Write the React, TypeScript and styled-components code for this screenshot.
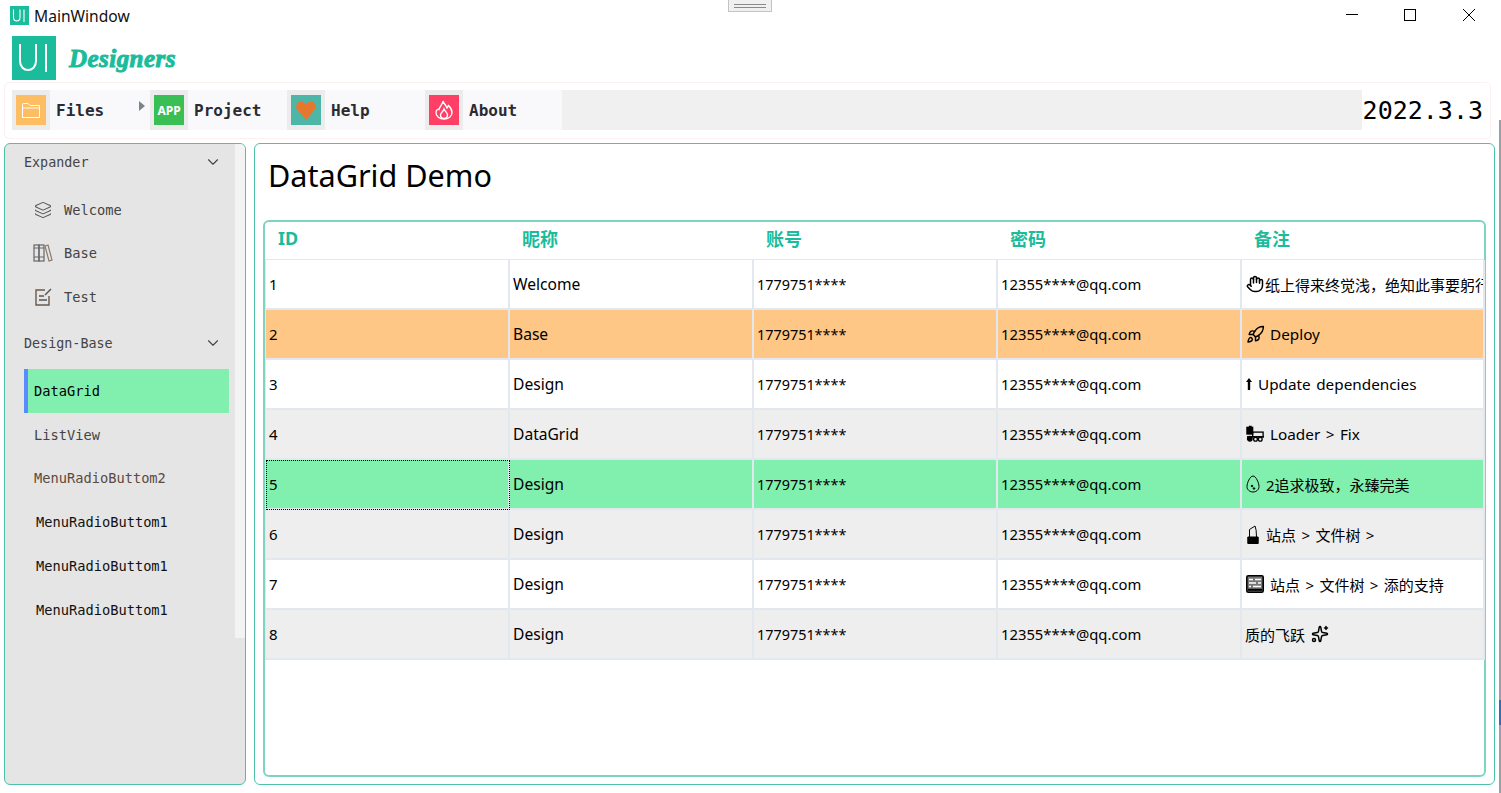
import { ReactNode } from 'react'
import styled, { createGlobalStyle } from 'styled-components'
import { ChevronDown, Hand, Layers, Rocket, Sparkles } from 'lucide-react'

const UI_FONT = `'Noto Sans', 'Noto Sans CJK SC', sans-serif`
const MONO_FONT = `'DejaVu Sans Mono', 'Liberation Mono', monospace`
const TEAL = '#1abc9c'

const GlobalStyle = createGlobalStyle`
  html, body {
    margin: 0;
    padding: 0;
    background: #fff;
    overflow: hidden;
  }
  * { box-sizing: border-box; }
`

const Page = styled.div`
  position: relative;
  width: 1501px;
  height: 793px;
  display: flex;
  flex-direction: column;
  background: #fff;
  font-family: ${UI_FONT};
  color: #000;
  overflow: hidden;
`

const TitleBar = styled.header`
  height: 36px;
  flex: none;
  display: flex;
  align-items: flex-start;
  padding: 6px 26px 0 10px;
`

const TitleIcon = styled.div`
  width: 19px;
  height: 19px;
  margin-right: 5px;
  background: ${TEAL};
  display: flex;
  align-items: center;
  justify-content: center;
`

const TitleText = styled.span`
  font-size: 15.6px;
  line-height: 21px;
  color: #111;
`

const DragHandle = styled.div`
  position: absolute;
  left: 728px;
  top: -1px;
  width: 44px;
  height: 13px;
  background: #f0f0f0;
  border: 1px solid #c4c4c4;
  display: flex;
  flex-direction: column;
  align-items: center;
  justify-content: center;
  gap: 2px;

  i {
    display: block;
    width: 32px;
    height: 1px;
    background: #8a8a8a;
  }
`

const WindowButtons = styled.div`
  margin-left: auto;
  display: flex;
  gap: 46px;
  padding-top: 3px;

  svg:last-child {
    margin-left: 1px;
  }
`

const LogoRow = styled.div`
  height: 46px;
  flex: none;
  display: flex;
  align-items: flex-start;
  padding-left: 12px;
`

const LogoMark = styled.div`
  width: 44px;
  height: 44px;
  background: ${TEAL};
  display: flex;
  align-items: center;
  justify-content: center;
`

const LogoText = styled.span`
  margin: 9px 0 0 13px;
  font-family: 'Liberation Serif', serif;
  font-style: italic;
  font-weight: 700;
  font-size: 25px;
  line-height: 28px;
  letter-spacing: 0.45px;
  color: ${TEAL};
  -webkit-text-stroke: 1px ${TEAL};
`

const MenuBar = styled.nav`
  height: 57px;
  flex: none;
  margin: 0 10px 0 4px;
  padding: 7px 7px 7px 7px;
  display: flex;
  border: 1px solid #fdf0f0;
  border-radius: 5px;
`

const MenuItem = styled.div<{ $width: number }>`
  position: relative;
  width: ${(p) => p.$width}px;
  height: 40px;
  flex: none;
  display: flex;
  align-items: center;
  background: #f9f9fc;
`

const MenuIconBox = styled.div`
  width: 38px;
  height: 40px;
  flex: none;
  background: #ececec;
  display: flex;
  align-items: center;
  justify-content: center;
`

const MenuIcon = styled.div<{ $bg: string }>`
  width: 30px;
  height: 30px;
  background: ${(p) => p.$bg};
  display: flex;
  align-items: center;
  justify-content: center;
  color: #fff;
  font-family: 'Noto Sans', sans-serif;
  font-size: 12px;
  font-weight: 700;
`

const MenuLabel = styled.span`
  margin-left: 6px;
  font-family: ${MONO_FONT};
  font-size: 16px;
  font-weight: 700;
  color: #2b2b33;
`

const SubArrow = styled.span`
  position: absolute;
  right: 5px;
  top: 11px;
  width: 0;
  height: 0;
  border-style: solid;
  border-width: 5px 0 5px 6px;
  border-color: transparent transparent transparent #7d8488;
`

const MenuFill = styled.div`
  flex: 1;
  height: 40px;
  background: #f0f0f0;
`

const VersionText = styled.span`
  width: 121px;
  flex: none;
  text-align: right;
  font-family: ${MONO_FONT};
  font-size: 25px;
  line-height: 42px;
`

const Content = styled.main`
  flex: 1;
  min-height: 0;
  display: flex;
  gap: 8px;
  padding: 4px 6px 8px 4px;
`

const Sidebar = styled.aside`
  position: relative;
  width: 242px;
  flex: none;
  padding: 0 16px 0 19px;
  background: #e5e5e5;
  border: 1px solid #4cc3a8;
  border-radius: 6px;
`

const ScrollTrack = styled.div`
  position: absolute;
  right: 0;
  top: 0;
  width: 10px;
  height: 494px;
  background: #f3f3f3;
  border-top-right-radius: 5px;
`

const GroupHeader = styled.div<{ $top: number }>`
  height: 36px;
  margin-top: ${(p) => p.$top}px;
  display: flex;
  align-items: center;
  justify-content: space-between;
  padding-right: 7px;
  font-family: ${MONO_FONT};
  font-size: 13.4px;
  color: #444;
  position: relative;
  z-index: 1;
`

const NavItem = styled.div<{ $indent: number; $active?: boolean; $color?: string; $height?: number; $top?: number }>`
  height: ${(p) => p.$height ?? 44}px;
  margin-top: ${(p) => p.$top ?? 0}px;
  display: flex;
  align-items: center;
  gap: 11px;
  padding-left: ${(p) => p.$indent}px;
  font-family: ${MONO_FONT};
  font-size: 13.7px;
  color: ${(p) => p.$color ?? '#444'};
  background: ${(p) => (p.$active ? '#81f0ae' : 'transparent')};
  border-left: ${(p) => (p.$active ? '4px solid #5b8cff' : 'none')};
  position: relative;
  z-index: 1;
`

const NavIcon = styled.span`
  width: 20px;
  height: 20px;
  display: flex;
  align-items: center;
  justify-content: center;
  flex: none;
  color: #555;
`

const Panel = styled.section`
  flex: 1;
  min-width: 0;
  display: flex;
  flex-direction: column;
  padding: 0 8px 7px 8px;
  border: 1px solid #4cc3a8;
  border-radius: 6px;
`

const PanelTitle = styled.h1`
  height: 76px;
  flex: none;
  margin: 0;
  padding: 8px 0 0 5px;
  font-size: 30.6px;
  font-weight: 400;
  line-height: 46px;
  color: #000;
`

const GridBox = styled.div`
  flex: 1;
  min-height: 0;
  border: 2px solid #7fd4c1;
  border-radius: 6px;
`

const GridRow = styled.div`
  display: grid;
  grid-template-columns: repeat(4, 244px) 243px;
`

const HeaderRow = styled(GridRow)`
  padding-left: 1px;
`

const HeaderCell = styled.div`
  height: 37px;
  padding: 0 0 5px 12px;
  display: flex;
  align-items: center;
  font-size: 18px;
  font-weight: 700;
  color: ${TEAL};
`

const Body = styled.div`
  border-top: 1px solid #e2e8ee;
  border-left: 1px solid #e2e8ee;
`

const Cell = styled.div<{ $bg: string; $focus?: boolean; $size?: number }>`
  position: relative;
  height: 50px;
  padding: 0 0 0 3px;
  display: flex;
  align-items: center;
  background: ${(p) => p.$bg};
  border-right: 2px solid #e2e8ee;
  border-bottom: 2px solid #e2e8ee;
  font-size: ${(p) => p.$size ?? 15}px;
  white-space: pre;
  word-spacing: 1.5px;
  overflow: hidden;
  outline: ${(p) => (p.$focus ? '1px dotted #000' : 'none')};
  outline-offset: -1px;
`

const NoteIcon = styled.span<{ $gap: number; $width: number; $before?: number }>`
  width: ${(p) => p.$width}px;
  height: 20px;
  margin: 0 ${(p) => p.$gap}px 0 ${(p) => p.$before ?? 1}px;
  display: inline-flex;
  align-items: center;
  justify-content: center;
  flex: none;
`

const WindowEdge = styled.div`
  position: absolute;
  right: 0;
  top: 120px;
  bottom: 0;
  width: 2px;
  background: linear-gradient(
    to bottom,
    #9aa0a5 0,
    #9aa0a5 580px,
    #2f6fb5 580px,
    #2f6fb5 605px,
    #9aa0a5 605px
  );
`

function UpArrow() {
  return (
    <svg width="6" height="14" viewBox="0 0 6 14">
      <path d="M3 1 L6 5 H4.2 V13 H1.8 V5 H0 Z" fill="#000" />
    </svg>
  )
}

function Locomotive() {
  return (
    <svg width="20" height="18" viewBox="0 0 20 18" fill="none" stroke="#000" strokeWidth="1.4">
      <rect x="1" y="2" width="6" height="7" fill="#000" />
      <path d="M3 1 h3" />
      <rect x="7" y="7" width="11" height="5" />
      <path d="M1 12 h18" />
      <circle cx="4" cy="14" r="2.4" fill="#000" />
      <circle cx="10" cy="14.5" r="2" />
      <circle cx="15" cy="14.5" r="2" />
    </svg>
  )
}

function EggDrop() {
  return (
    <svg width="14" height="18" viewBox="0 0 14 18" fill="none" stroke="#000" strokeWidth="1">
      <path d="M7 1 C10 1 13 8 13 11.5 C13 15 10 17 7 17 C4 17 1 15 1 11.5 C1 8 4 1 7 1 Z" />
      <circle cx="6" cy="11" r="0.8" fill="#000" />
      <circle cx="8" cy="13.5" r="0.8" fill="#000" />
    </svg>
  )
}

function Lipstick() {
  return (
    <svg width="14" height="19" viewBox="0 0 14 19" fill="none" stroke="#000" strokeWidth="1">
      <path d="M3.5 12 V4.5 L9 1 Q10.5 4 10.5 12" />
      <path d="M1.8 12 H12.2 V18.5 H1.8 Z" fill="#000" />
    </svg>
  )
}

function Abacus() {
  return (
    <svg width="18" height="18" viewBox="0 0 18 18" fill="none">
      <rect x="0.8" y="0.8" width="16.4" height="16.4" rx="1.5" fill="#777" stroke="#000" strokeWidth="1.6" />
      <path d="M3 4.5 h4 M9 4.5 h6 M3 8 h7 M12 8 h3 M3 11.5 h2 M7 11.5 h8" stroke="#fff" strokeWidth="1.4" />
      <path d="M2 14.8 h14" stroke="#000" strokeWidth="2" />
    </svg>
  )
}

function Books() {
  return (
    <svg width="20" height="20" viewBox="0 0 20 20" fill="none" stroke="#666" strokeWidth="1.2">
      <rect x="1" y="2" width="5" height="16" />
      <rect x="6" y="2" width="5" height="16" />
      <path d="M12 3 l3 -1 l4 15 l-3 1 z" stroke="#8a7a6a" />
      <path d="M1 5 h5 M6 5 h5 M1 14 h5 M6 14 h5" />
    </svg>
  )
}

function NoteEdit() {
  return (
    <svg width="18" height="18" viewBox="0 0 18 18" fill="none" stroke="#6b5a4c" strokeWidth="1.4">
      <path d="M11 2 H2 V17 H15 V8" />
      <path d="M5 8 H10 M5 12 H13" stroke="#555" />
      <path d="M11 7 L17 1" stroke="#555" />
    </svg>
  )
}

function FolderOutline() {
  return (
    <svg width="20" height="17" viewBox="0 0 20 17" fill="none" stroke="#fff" strokeWidth="1">
      <path d="M1.5 15.5 V2.5 Q1.5 1.5 2.5 1.5 H7 L9 3.5 H18.5 V15.5 Z" />
      <path d="M1.5 6 H18.5" />
    </svg>
  )
}

function FlameOutline() {
  return (
    <svg width="18" height="20" viewBox="0 0 18 20" fill="none" stroke="#fff" strokeWidth="1.4">
      <path d="M8 1 C9 4 11 5 12 8 C13 7 13 6 13.5 5.5 C16 8 17 10 17 12.5 C17 16.5 13.5 19 9 19 C4.5 19 1 16.5 1 12.5 C1 10 3 8.5 4 9.5 C5 6 8 4 8 1 Z" />
      <path d="M9 9 C10 11.5 12.5 12.5 12.5 15 C12.5 17 11 18.4 9 18.4 C7 18.4 5.5 17 5.5 15 C5.5 13 8 12 9 9 Z" />
    </svg>
  )
}

type Row = {
  id: number
  name: string
  bg: string
  note: string
  size?: number
  icon?: ReactNode
  iconWidth?: number
  iconGap?: number
  trailing?: ReactNode
}

const WHITE = '#ffffff'
const GREY = '#eeeeee'
const ORANGE = '#fec786'
const GREEN = '#81f0ae'

const rows: Row[] = [
  {
    id: 1,
    name: 'Welcome',
    bg: WHITE,
    note: '纸上得来终觉浅，绝知此事要躬行',
    icon: <Hand size={18} strokeWidth={2} color="#000" />,
    iconWidth: 18,
    iconGap: 1,
  },
  {
    id: 2,
    name: 'Base',
    bg: ORANGE,
    note: 'Deploy',
    size: 15.3,
    icon: <Rocket size={19} strokeWidth={1.8} color="#000" />,
    iconWidth: 19,
    iconGap: 5,
  },
  { id: 3, name: 'Design', bg: WHITE, note: 'Update dependencies', size: 15.3, icon: <UpArrow />, iconWidth: 6, iconGap: 6 },
  { id: 4, name: 'DataGrid', bg: GREY, note: 'Loader > Fix', size: 15.3, icon: <Locomotive />, iconWidth: 19, iconGap: 5 },
  { id: 5, name: 'Design', bg: GREEN, note: '2追求极致，永臻完美', icon: <EggDrop />, iconWidth: 14, iconGap: 6 },
  { id: 6, name: 'Design', bg: GREY, note: '站点 > 文件树 >', icon: <Lipstick />, iconWidth: 14, iconGap: 6 },
  { id: 7, name: 'Design', bg: WHITE, note: '站点 > 文件树 > 添的支持', icon: <Abacus />, iconWidth: 18, iconGap: 6 },
  {
    id: 8,
    name: 'Design',
    bg: GREY,
    note: '质的飞跃',
    trailing: <Sparkles size={18} strokeWidth={2} color="#000" />,
  },
]

const columns = ['ID', '昵称', '账号', '密码', '备注']

export default function App() {
  return (
    <Page>
      <GlobalStyle />
      <DragHandle>
        <i />
        <i />
      </DragHandle>
      <WindowEdge />

      <TitleBar>
        <TitleIcon>
          <svg width="15" height="15" viewBox="0 0 15 15" fill="none" stroke="#fff" strokeWidth="1.1">
            <path d="M1.5 1.5 V9.5 C1.5 14 8 14 8 9.5 V1.5 M12 1.5 V14" />
          </svg>
        </TitleIcon>
        <TitleText>MainWindow</TitleText>
        <WindowButtons>
          <svg width="12" height="12" viewBox="0 0 12 12" stroke="#000" strokeWidth="1">
            <path d="M0 5.5 H12" />
          </svg>
          <svg width="12" height="12" viewBox="0 0 12 12" fill="none" stroke="#000" strokeWidth="1">
            <rect x="0.5" y="0.5" width="11" height="11" />
          </svg>
          <svg width="12" height="12" viewBox="0 0 12 12" stroke="#000" strokeWidth="1">
            <path d="M0 0 L12 12 M12 0 L0 12" />
          </svg>
        </WindowButtons>
      </TitleBar>

      <LogoRow>
        <LogoMark>
          <svg width="32" height="32" viewBox="0 0 32 32" fill="none" stroke="#fff" strokeWidth="2">
            <path d="M2 2 V19 C2 31 18 31 18 19 V2 M28 2 V30" />
          </svg>
        </LogoMark>
        <LogoText>Designers</LogoText>
      </LogoRow>

      <MenuBar>
        <MenuItem $width={138}>
          <MenuIconBox>
            <MenuIcon $bg="#fdbd63">
              <FolderOutline />
            </MenuIcon>
          </MenuIconBox>
          <MenuLabel>Files</MenuLabel>
          <SubArrow />
        </MenuItem>
        <MenuItem $width={137}>
          <MenuIconBox>
            <MenuIcon $bg="#3abf55">APP</MenuIcon>
          </MenuIconBox>
          <MenuLabel>Project</MenuLabel>
        </MenuItem>
        <MenuItem $width={138}>
          <MenuIconBox>
            <MenuIcon $bg="#4db6a6">
              <svg width="22" height="22" viewBox="0 0 24 24" fill="#e8772e">
                <path d="M12 23 L2 11 C-1 5 7 -1 12 6 C17 -1 25 5 22 11 Z" />
              </svg>
            </MenuIcon>
          </MenuIconBox>
          <MenuLabel>Help</MenuLabel>
        </MenuItem>
        <MenuItem $width={137}>
          <MenuIconBox>
            <MenuIcon $bg="#ff3f66">
              <FlameOutline />
            </MenuIcon>
          </MenuIconBox>
          <MenuLabel>About</MenuLabel>
        </MenuItem>
        <MenuFill />
        <VersionText>2022.3.3</VersionText>
      </MenuBar>

      <Content>
        <Sidebar>
          <ScrollTrack />
          <GroupHeader $top={0}>
            Expander
            <ChevronDown size={18} strokeWidth={1.5} color="#444" />
          </GroupHeader>
          <NavItem $indent={9} $height={44} $top={8}>
            <NavIcon>
              <Layers size={18} strokeWidth={1.4} />
            </NavIcon>
            Welcome
          </NavItem>
          <NavItem $indent={9} $height={42}>
            <NavIcon>
              <Books />
            </NavIcon>
            Base
          </NavItem>
          <NavItem $indent={9} $height={45}>
            <NavIcon>
              <NoteEdit />
            </NavIcon>
            Test
          </NavItem>
          <GroupHeader $top={6}>
            Design-Base
            <ChevronDown size={18} strokeWidth={1.5} color="#444" />
          </GroupHeader>
          <NavItem $indent={6} $active $color="#000" $top={8}>
            DataGrid
          </NavItem>
          <NavItem $indent={10} $height={43}>
            ListView
          </NavItem>
          <NavItem $indent={10} $color="#5b4a40">
            MenuRadioButtom2
          </NavItem>
          <NavItem $indent={12} $color="#111">
            MenuRadioButtom1
          </NavItem>
          <NavItem $indent={12} $color="#111">
            MenuRadioButtom1
          </NavItem>
          <NavItem $indent={12} $color="#111">
            MenuRadioButtom1
          </NavItem>
        </Sidebar>

        <Panel>
          <PanelTitle>DataGrid Demo</PanelTitle>
          <GridBox>
            <HeaderRow>
              {columns.map((col) => (
                <HeaderCell key={col}>{col}</HeaderCell>
              ))}
            </HeaderRow>
            <Body>
              {rows.map((row) => (
                <GridRow key={row.id}>
                  <Cell $bg={row.bg} $focus={row.id === 5}>
                    {row.id}
                  </Cell>
                  <Cell $bg={row.bg} $size={15.6}>
                    {row.name}
                  </Cell>
                  <Cell $bg={row.bg} $size={14.4}>
                    1779751****
                  </Cell>
                  <Cell $bg={row.bg} $size={14.8}>
                    12355****@qq.com
                  </Cell>
                  <Cell $bg={row.bg} $size={row.size}>
                    {row.icon && (
                      <NoteIcon $width={row.iconWidth ?? 18} $gap={row.iconGap ?? 4}>
                        {row.icon}
                      </NoteIcon>
                    )}
                    {row.note}
                    {row.trailing && (
                      <NoteIcon $width={18} $gap={0} $before={6}>
                        {row.trailing}
                      </NoteIcon>
                    )}
                  </Cell>
                </GridRow>
              ))}
            </Body>
          </GridBox>
        </Panel>
      </Content>
    </Page>
  )
}
